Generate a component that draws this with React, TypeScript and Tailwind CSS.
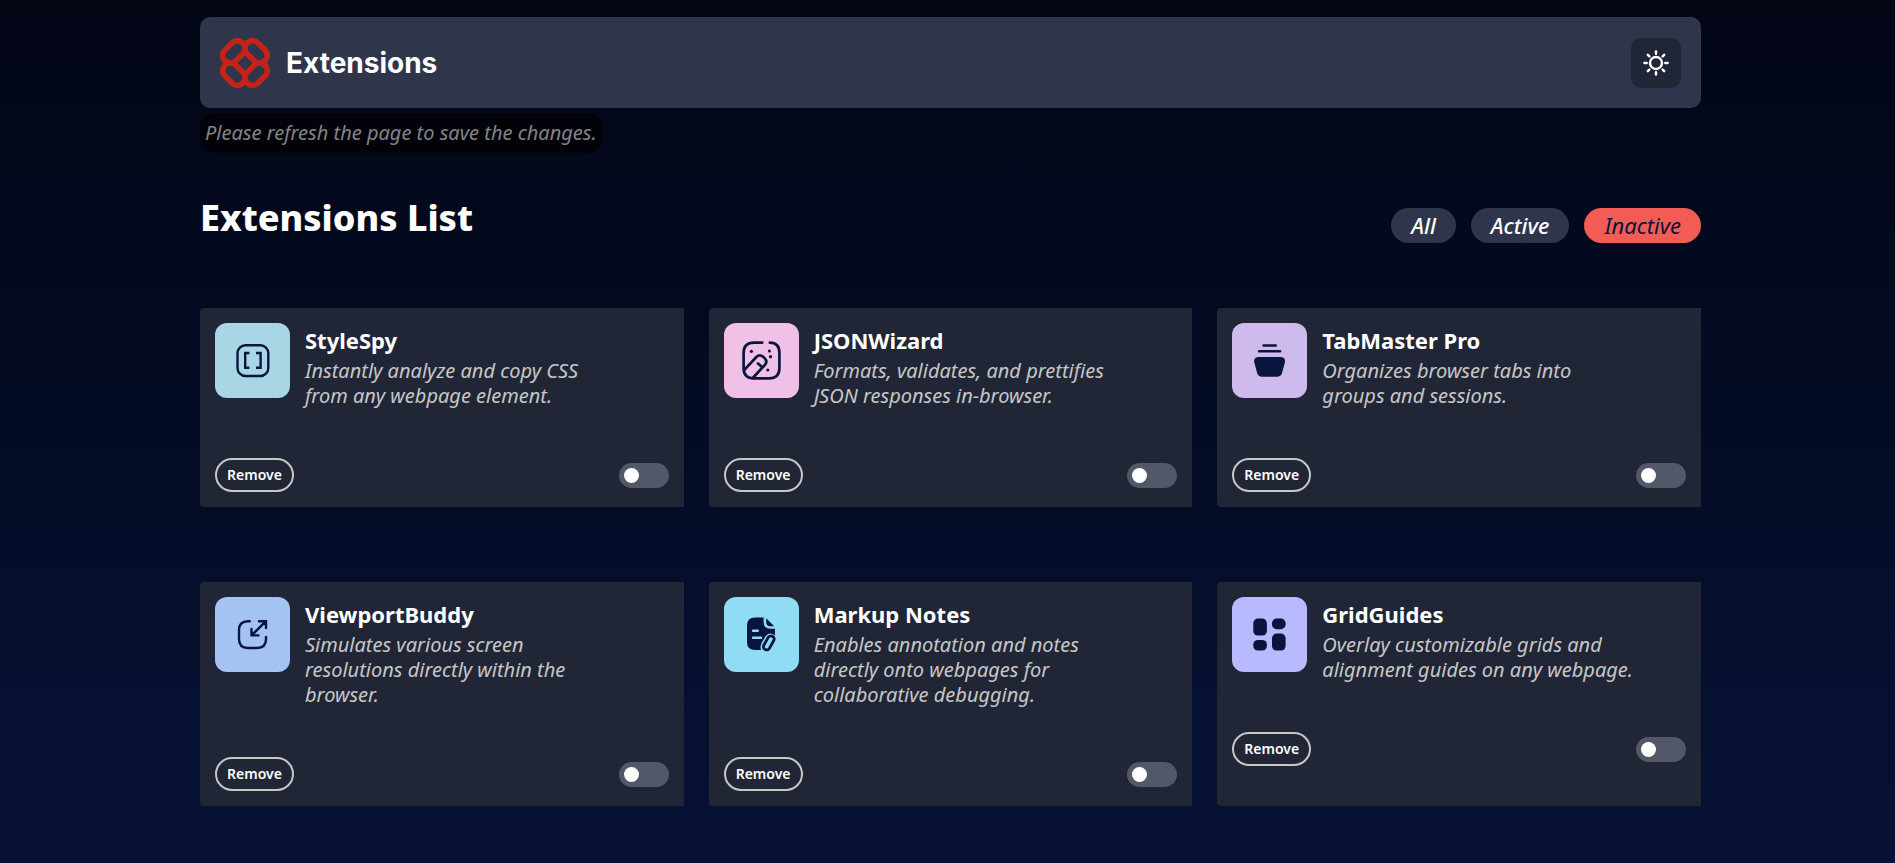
import { useState } from "react";
import type { ReactNode } from "react";

const NAVY = "#09153e";

function Logo() {
  return (
    <svg viewBox="0 0 50 50" className="size-[50px]" fill="none" stroke="#c7221a" strokeWidth="5.5" aria-hidden="true">
      {[0, 90, 180, 270].map((angle) => (
        <g key={angle} transform={`rotate(${angle} 25 25)`}>
          <rect x="1.4" y="6.3" width="25" height="15.2" rx="7.2" transform="rotate(-45 13.9 13.9)" />
        </g>
      ))}
    </svg>
  );
}

function Sun() {
  return (
    <svg viewBox="0 0 26 26" className="size-[26px]" fill="none" stroke="#fff" strokeWidth="2.4" strokeLinecap="round" aria-hidden="true">
      <circle cx="13" cy="13" r="6" />
      {[0, 45, 90, 135, 180, 225, 270, 315].map((angle) => (
        <path key={angle} d="M13 1.4V3.7" transform={`rotate(${angle} 13 13)`} />
      ))}
    </svg>
  );
}

const stroke = { fill: "none", stroke: NAVY, strokeWidth: 2.4, strokeLinecap: "round", strokeLinejoin: "round" } as const;

const icons: Record<string, ReactNode> = {
  brackets: (
    <g {...stroke}>
      <rect x="22.5" y="22.2" width="30.8" height="30.8" rx="8" />
      <path d="M34.4 30H30.2V44.8H34.4M41 30H45.6V44.8H41" strokeLinecap="butt" strokeLinejoin="miter" />
    </g>
  ),
  wand: (
    <g {...stroke} strokeWidth="2.7">
      <path d="M38.2 19.7H30Q19.6 19.7 19.6 30V45Q19.6 55.4 30 55.4H45Q55.4 55.4 55.4 45V30Q55.4 19.7 45.8 19.7" />
      <path d="M20.6 46.6L32.4 34Q35.5 31 39 33.6L40.8 35.4Q43.8 38.6 40.8 42L28.8 55M34 40.5L38.3 44.2" />
      <g fill={NAVY} stroke="none">
        <circle cx="27.4" cy="28.3" r="1.6" />
        <circle cx="45.4" cy="28" r="1.6" />
        <circle cx="46.5" cy="33.7" r="1.6" />
        <circle cx="43.8" cy="47" r="1.6" />
      </g>
    </g>
  ),
  tabs: (
    <g {...stroke}>
      <path d="M31.5 22.5H43.8M27 28.2H48.2" />
      <path d="M27 34H48.2Q53.6 34 53 39L50.2 49.5Q49 53.8 45 53.8H30.2Q26.2 53.8 25 49.5L22.2 39Q21.6 34 27 34Z" fill={NAVY} stroke="none" />
    </g>
  ),
  viewport: (
    <g {...stroke}>
      <path d="M34.8 24.2H33Q24 24.2 24 33V42Q24 51 33 51H42Q51 51 51 42V40" />
      <path d="M44 24.2H51V31M51 24.2L36.5 38.4M36.5 32V38.4H43.5" />
    </g>
  ),
  notes: (
    <g>
      <path d="M31 20.4H39.6V25Q39.6 31.8 46.4 31.8H51V38.5Q45 33.8 40.8 40.4L37.6 46Q35.8 49.8 37 53H31Q23 53 23 45V28.4Q23 20.4 31 20.4Z" fill={NAVY} />
      <path d="M42.2 21.2L50.2 29.2H46.4Q42.2 29.2 42.2 25Z" fill={NAVY} />
      <path d="M29 33.8H33.8M29 40.8H37" stroke="#8fdcf4" strokeWidth="2.4" strokeLinecap="round" />
      <rect x="41.6" y="38.4" width="6.4" height="15" rx="3" transform="rotate(29 44.8 45.9)" {...stroke} strokeWidth="2.8" />
    </g>
  ),
  grid: (
    <g fill={NAVY}>
      <rect x="21.3" y="21.6" width="13.6" height="17" rx="4.6" />
      <rect x="40" y="21.6" width="13.6" height="10.6" rx="4.6" />
      <rect x="21.3" y="43" width="13.6" height="10.6" rx="4.6" />
      <rect x="40" y="36.6" width="13.6" height="17" rx="4.6" />
    </g>
  ),
};

const extensions = [
  { name: "StyleSpy", text: "Instantly analyze and copy CSS from any webpage element.", icon: "brackets", tile: "bg-[#a8d6e4]" },
  { name: "JSONWizard", text: "Formats, validates, and prettifies JSON responses in-browser.", icon: "wand", tile: "bg-[#f0c0e6]" },
  { name: "TabMaster Pro", text: "Organizes browser tabs into groups and sessions.", icon: "tabs", tile: "bg-[#cfbaee]" },
  { name: "ViewportBuddy", text: "Simulates various screen resolutions directly within the browser.", icon: "viewport", tile: "bg-[#a4c3f3]" },
  { name: "Markup Notes", text: "Enables annotation and notes directly onto webpages for collaborative debugging.", icon: "notes", tile: "bg-[#8fdcf4]" },
  { name: "GridGuides", text: "Overlay customizable grids and alignment guides on any webpage.", icon: "grid", tile: "bg-[#b9b9ff]" },
];

function Card({ name, text, icon, tile }: (typeof extensions)[number]) {
  return (
    <article className="rounded-l bg-[#212636] p-[15px]">
      <div className="flex items-start gap-[15px]">
        <svg viewBox="0 0 75 75" className={`size-[75px] shrink-0 rounded-xl ${tile}`} aria-hidden="true">
          {icons[icon]}
        </svg>
        <div className="max-w-[312px] pt-[5px]">
          <h2 className="mb-[5px] text-[22px] leading-[25px] font-bold text-white">{name}</h2>
          <p className="text-[20px] leading-[25px] text-[#c7c7c7] italic">{text}</p>
        </div>
      </div>
      <div className="mt-[50px] flex items-center justify-between">
        <button className="h-[34px] rounded-full border-2 border-[#c7c7c7] px-[10px] text-[14px] leading-5 font-semibold text-white">
          Remove
        </button>
        <input
          type="checkbox"
          role="switch"
          aria-label={`Enable ${name}`}
          className="h-[25px] w-[50px] appearance-none rounded-full bg-[#535868] p-[5px] before:block before:size-[15px] before:rounded-full before:bg-white checked:bg-[#f25c54] checked:before:ml-auto"
        />
      </div>
    </article>
  );
}

export default function App() {
  const [filter, setFilter] = useState("Inactive");
  return (
    <div className="min-h-screen bg-linear-to-b from-[#020615] to-[#071236] pt-[17px] pr-[194px] pb-[57px] pl-[200px] font-['Noto_Sans',sans-serif]">
      <header className="flex items-center justify-between rounded-[10px] bg-[#2f364b] px-5 pt-[21px] pb-5">
        <div className="flex items-center gap-4">
          <Logo />
          <span className="font-['Inter',sans-serif] text-[28px] leading-9 font-bold text-white">Extensions</span>
        </div>
        <button aria-label="Switch theme" className="grid size-[50px] place-items-center rounded-[10px] bg-[#212636]">
          <Sun />
        </button>
      </header>
      <p className="mt-[5px] w-fit rounded-[15px] bg-[#010309] px-[5px] text-[20px] leading-[40px] text-[#828389] italic">
        Please refresh the page to save the changes.
      </p>
      <div className="mt-[40px] flex items-end justify-between">
        <h1 className="text-[36px] leading-[50px] font-extrabold text-white">Extensions List</h1>
        <div className="flex gap-[15px]">
          {["All", "Active", "Inactive"].map((label) => (
            <button
              key={label}
              onClick={() => setFilter(label)}
              aria-pressed={filter === label}
              className={`h-[35px] rounded-full px-5 text-[22px] leading-[35px] italic ${
                filter === label ? "bg-[#f25c54] text-[#09153e]" : "bg-[#2f364b] font-medium text-white"
              }`}
            >
              {label}
            </button>
          ))}
        </div>
      </div>
      <main className="mt-[65px] grid grid-cols-3 gap-x-[25px] gap-y-[75px]">
        {extensions.map((item) => (
          <Card key={item.name} {...item} />
        ))}
      </main>
    </div>
  );
}
